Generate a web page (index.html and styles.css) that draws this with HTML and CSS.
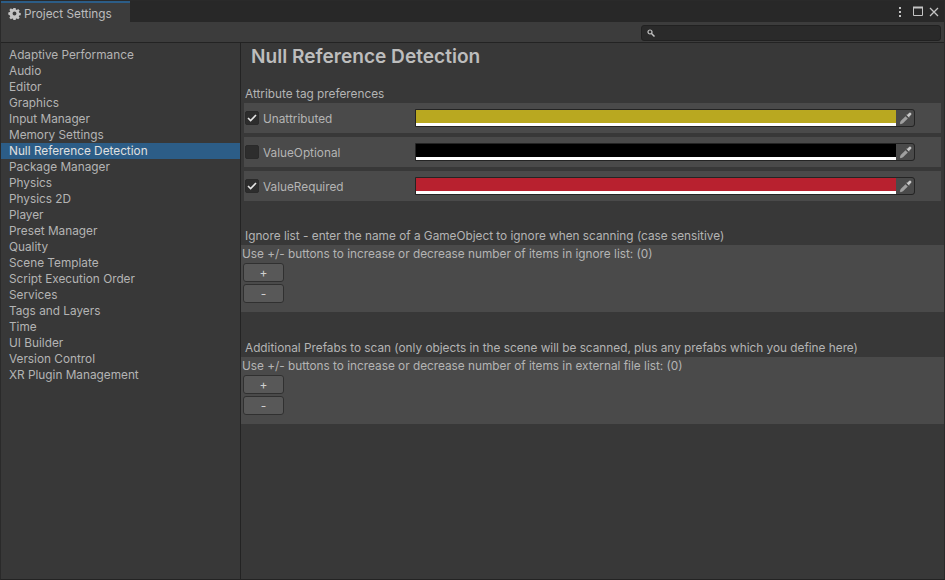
FILE: index.html
```html
<!DOCTYPE html>
<html lang="en">
<head>
  <meta charset="UTF-8">
  <title>Project Settings</title>
  <link rel="stylesheet" href="styles.css">
</head>
<body>
  <div class="window">
    <div class="tabbar">
      <div class="tab">
        <svg class="gear" width="13" height="13" viewBox="0 0 14 14">
          <path fill="#c4c4c4" fill-rule="evenodd" d="M5.800 1h2.400l.3 1.700 1 .4 1.400-1 1.700 1.700-1 1.400.4 1 1.700.3v2.400l-1.700.3-.4 1 1 1.400-1.700 1.700-1.400-1-1 .4-.3 1.700H5.800l-.3-1.700-1-.4-1.400 1-1.700-1.700 1-1.400-.4-1L.3 8.200V5.800l1.700-.3.4-1-1-1.400 1.700-1.700 1.400 1 1-.4zM7 4.900a2.100 2.100 0 1 0 0 4.200 2.100 2.100 0 0 0 0-4.200z"/>
        </svg>
        <span>Project Settings</span>
      </div>
      <div class="win-buttons">
        <svg class="menu-dots" width="4" height="12" viewBox="0 0 4 12"><g fill="#c4c4c4"><rect x="1" y="1" width="2" height="2"/><rect x="1" y="5" width="2" height="2"/><rect x="1" y="9" width="2" height="2"/></g></svg>
        <svg width="11" height="11" viewBox="0 0 11 11"><path fill="none" stroke="#c4c4c4" d="M.5 1.500h9v8h-9z"/><path stroke="#c4c4c4" stroke-width="2" d="M0 1.500h10"/></svg>
        <svg width="10" height="10" viewBox="0 0 10 10"><path fill="none" stroke="#c4c4c4" stroke-width="1.300" d="M1 1l8 8M9 1l-8 8"/></svg>
      </div>
    </div>
    <div class="toolbar">
      <div class="search">
        <svg width="8" height="8" viewBox="0 0 8 8"><circle cx="3" cy="3" r="2" fill="none" stroke="#c4c4c4" stroke-width="1.200"/><path stroke="#c4c4c4" stroke-width="1.500" d="M4.500 4.500L7.500 7.500"/></svg>
      </div>
    </div>
    <div class="main">
      <ul class="sidebar">
        <li>Adaptive Performance</li>
        <li>Audio</li>
        <li>Editor</li>
        <li>Graphics</li>
        <li>Input Manager</li>
        <li>Memory Settings</li>
        <li class="selected">Null Reference Detection</li>
        <li>Package Manager</li>
        <li>Physics</li>
        <li>Physics 2D</li>
        <li>Player</li>
        <li>Preset Manager</li>
        <li>Quality</li>
        <li>Scene Template</li>
        <li>Script Execution Order</li>
        <li>Services</li>
        <li>Tags and Layers</li>
        <li>Time</li>
        <li>UI Builder</li>
        <li>Version Control</li>
        <li>XR Plugin Management</li>
      </ul>
      <div class="content">
        <h1>Null Reference Detection</h1>
        <div class="section-label first">Attribute tag preferences</div>
        <div class="tag-row">
          <span class="check"><svg width="10" height="8" viewBox="0 0 10 8"><path fill="none" stroke="#e4e4e4" stroke-width="1.600" d="M1 4l2.600 2.600L9 1"/></svg></span>
          <span class="tag-name">Unattributed</span>
          <div class="color-field">
            <div class="swatch yellow"></div>
            <div class="picker"><svg width="13" height="13" viewBox="0 0 13 13"><path fill="#c8c8c8" d="M7.200 2.800l1.500-.3 1.300-1.500a1.400 1.400 0 0 1 2 2l-1.500 1.300-.3 1.500z"/><path fill="#a0a0a0" d="M6.500 4.200l2.300 2.300-4.800 4.800-2.300.9-.9-.9.9-2.300z"/></svg></div>
          </div>
        </div>
        <div class="tag-row">
          <span class="check"></span>
          <span class="tag-name">ValueOptional</span>
          <div class="color-field">
            <div class="swatch black"></div>
            <div class="picker"><svg width="13" height="13" viewBox="0 0 13 13"><path fill="#c8c8c8" d="M7.200 2.800l1.500-.3 1.300-1.500a1.400 1.400 0 0 1 2 2l-1.500 1.300-.3 1.500z"/><path fill="#a0a0a0" d="M6.500 4.200l2.300 2.300-4.800 4.800-2.300.9-.9-.9.9-2.300z"/></svg></div>
          </div>
        </div>
        <div class="tag-row">
          <span class="check"><svg width="10" height="8" viewBox="0 0 10 8"><path fill="none" stroke="#e4e4e4" stroke-width="1.600" d="M1 4l2.600 2.600L9 1"/></svg></span>
          <span class="tag-name">ValueRequired</span>
          <div class="color-field">
            <div class="swatch red"></div>
            <div class="picker"><svg width="13" height="13" viewBox="0 0 13 13"><path fill="#c8c8c8" d="M7.200 2.800l1.500-.3 1.300-1.500a1.400 1.400 0 0 1 2 2l-1.500 1.300-.3 1.500z"/><path fill="#a0a0a0" d="M6.500 4.200l2.300 2.300-4.800 4.800-2.300.9-.9-.9.9-2.300z"/></svg></div>
          </div>
        </div>
        <div class="section-label ignore">Ignore list - enter the name of a GameObject to ignore when scanning (case sensitive)</div>
        <div class="list-panel">
          <div class="list-text">Use +/- buttons to increase or decrease number of items in ignore list: (0)</div>
          <button class="btn" type="button">+</button>
          <button class="btn" type="button">-</button>
        </div>
        <div class="section-label prefabs">Additional Prefabs to scan (only objects in the scene will be scanned, plus any prefabs which you define here)</div>
        <div class="list-panel">
          <div class="list-text">Use +/- buttons to increase or decrease number of items in external file list: (0)</div>
          <button class="btn" type="button">+</button>
          <button class="btn" type="button">-</button>
        </div>
      </div>
    </div>
  </div>
</body>
</html>
```

FILE: styles.css
```css
* {
  box-sizing: border-box;
}
html,
body {
  margin: 0;
  height: 100%;
  overflow: hidden;
}
body {
  font-family: Inter, "Liberation Sans", sans-serif;
  font-size: 11.8px;
  color: #b4b4b4;
  background-color: #383838;
}
.window {
  height: 580px;
  display: flex;
  flex-direction: column;
  border: 1px solid #2a2a2a;
  border-bottom-color: #232323;
}
.tabbar {
  height: 21px;
  flex: none;
  display: flex;
  justify-content: space-between;
  background-color: #282828;
}
.tab {
  width: 129px;
  display: flex;
  align-items: center;
  gap: 3px;
  padding: 2px 0 0 7px;
  background-color: #3c3c3c;
  border-top: 2px solid #2c5d87;
  color: #bdbdbd;
}
.win-buttons {
  display: flex;
  align-items: center;
  gap: 5px;
  padding: 0 5px 0 0;
}
.menu-dots {
  margin-right: 6px;
}
.toolbar {
  height: 21px;
  flex: none;
  display: flex;
  justify-content: flex-end;
  align-items: center;
  background-color: #3c3c3c;
  border-bottom: 1px solid #232323;
  padding: 2px 3px 0 0;
}
.search {
  width: 300px;
  height: 16px;
  display: flex;
  align-items: center;
  padding-left: 5px;
  background-color: #2a2a2a;
  border: 1px solid #212121;
  border-radius: 3px;
}
.main {
  flex: 1;
  display: flex;
  min-height: 0;
}
.sidebar {
  width: 240px;
  flex: none;
  list-style: none;
  margin: 0;
  padding: 4px 0 0;
  border-right: 1px solid #232323;
}
.sidebar li {
  height: 16px;
  line-height: 16px;
  padding-left: 8px;
}
.sidebar .selected {
  background-color: #2c5d87;
  color: #e0e0e0;
}
.content {
  flex: 1;
  min-width: 0;
}
h1 {
  margin: 0;
  height: 28px;
  padding: 0 0 0 10px;
  font-size: 19.1px;
  line-height: 27px;
  font-weight: 600;
  color: #bdbdbd;
}
.section-label {
  height: 16px;
  line-height: 16px;
  padding-left: 4px;
}
.section-label.first {
  margin-top: 15px;
  margin-bottom: 1px;
}
.section-label.ignore {
  margin-top: 27px;
  margin-bottom: 1px;
}
.section-label.prefabs {
  margin-top: 28px;
  margin-bottom: 1px;
}
.tag-row {
  height: 30px;
  margin: 0 3px 4px 3px;
  display: flex;
  align-items: center;
  padding-left: 1px;
  background-color: #4a4a4a;
}
.check {
  width: 14px;
  height: 14px;
  flex: none;
  display: flex;
  align-items: center;
  justify-content: center;
  background-color: #2d2d2d;
  border: 1px solid #2a2a2a;
  border-radius: 2px;
}
.tag-name {
  width: 152px;
  flex: none;
  margin-left: 4px;
  padding-top: 2px;
}
.color-field {
  width: 500px;
  height: 18px;
  display: flex;
  background-color: #383838;
  border: 1px solid #242424;
  border-radius: 0 3px 3px 0;
}
.swatch {
  flex: 1;
  border-bottom: 3px solid #fff;
}
.yellow {
  background-color: #b9a820;
}
.black {
  background-color: #000;
}
.red {
  background-color: #b8212f;
}
.picker {
  width: 18px;
  flex: none;
  display: flex;
  align-items: center;
  justify-content: center;
  background-color: #4a4a4a;
  border-radius: 0 3px 3px 0;
}
.list-panel {
  height: 67px;
  padding-top: 1px;
  background-color: #4a4a4a;
}
.list-text {
  height: 16px;
  line-height: 16px;
  padding-left: 1px;
  margin-bottom: 1px;
}
.btn {
  display: block;
  width: 41px;
  height: 19px;
  margin: 0 0 2px 2px;
  padding: 0;
  font-family: inherit;
  font-size: 12px;
  line-height: 16px;
  color: #d0d0d0;
  background-color: #585858;
  border: 1px solid #303030;
  border-radius: 3px;
}
```
